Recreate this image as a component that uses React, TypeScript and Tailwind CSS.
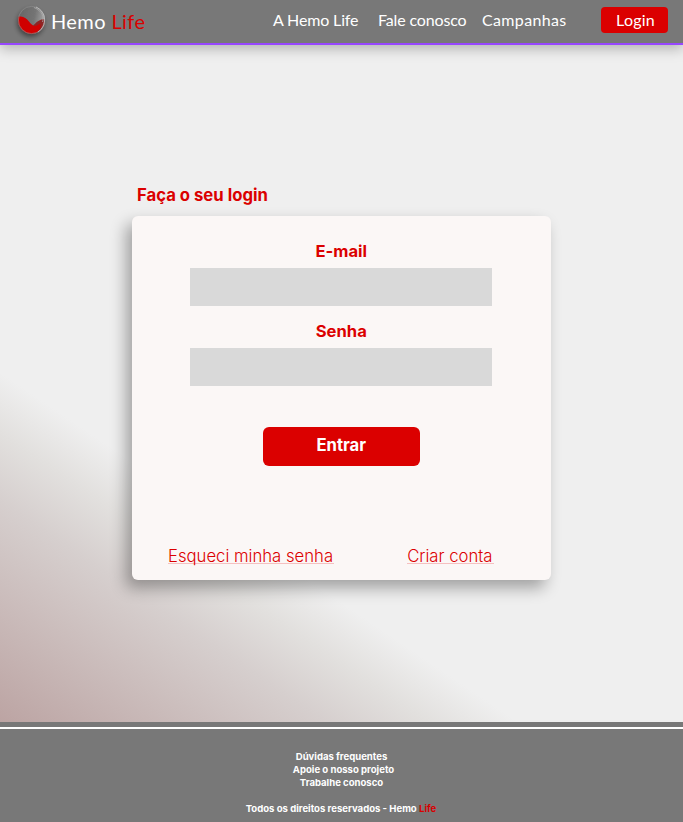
import React from 'react';

function Logo() {
  return (
    <svg className="block h-[44px] w-[44px] shrink-0" viewBox="0 0 44 44" aria-hidden="true">
      <defs>
        <filter id="drop" x="-30%" y="-30%" width="160%" height="170%">
          <feDropShadow dx="-1" dy="3" stdDeviation="2.4" floodColor="#000" floodOpacity="0.45" />
        </filter>
        <linearGradient id="glass" x1="0" x2="1" y1="0" y2="0.2">
          <stop offset="0" stopColor="#666" />
          <stop offset="0.65" stopColor="#747474" />
          <stop offset="1" stopColor="#a0a0a0" />
        </linearGradient>
        <clipPath id="ball">
          <ellipse cx="22.6" cy="20" rx="13.4" ry="13.8" />
        </clipPath>
      </defs>
      <ellipse cx="22.6" cy="20" rx="13.4" ry="13.8" fill="url(#glass)" filter="url(#drop)" />
      <g clipPath="url(#ball)">
        <path d="M23 27 C28 21 31 19 37 19 V34 H20Z" fill="#8e2424" />
        <path d="M8 17.5 C13 15 17 18 20 21.5 C24 26.5 26 27.5 31 23.5 C33 28 29 34 22 34 H8Z" fill="#d00000" />
      </g>
      <ellipse cx="22.6" cy="20" rx="13.2" ry="13.6" fill="none" stroke="#999" strokeWidth="0.5" />
      <path d="M27 7 C38 12 38 26 29 32" fill="none" stroke="#bdbdbd" strokeWidth="0.9" />
      <path d="M25 7.5 C34 11 35 18 33.5 22" fill="none" stroke="#aaa" strokeWidth="0.8" />
    </svg>
  );
}

function Header() {
  return (
    <header className="relative z-10 flex h-[45px] shrink-0 items-start border-b-2 border-[#9747ff] bg-[#787878] pl-[9px] font-['Lato',sans-serif] text-white shadow-[0_4px_12px_rgba(0,0,0,0.25)]">
      <Logo />
      <a className="-ml-[2px] mt-[7px] w-[222px] whitespace-nowrap text-[20px] leading-[28px] tracking-[0.4px]">
        Hemo <span className="text-[#d90000]">Life</span>
      </a>
      <nav className="mt-[8px] flex whitespace-nowrap text-[16px] leading-[24px]">
        <a className="w-[105px] tracking-[-0.15px]">A Hemo Life</a>
        <a className="w-[104px] tracking-[-0.15px]">Fale conosco</a>
        <a className="w-[119px] tracking-[0.35px]">Campanhas</a>
      </nav>
      <a className="mt-[7px] h-[26px] w-[67px] rounded bg-[#db0000] pl-[2px] text-center text-[16px] leading-[26px] tracking-[0.2px]">Login</a>
    </header>
  );
}

function Field({ label }: { label: string }) {
  return (
    <label className="flex w-[302px] flex-col items-center">
      <span className="h-[28px] text-[16.6px] font-bold leading-[22px] text-[#db0000]">{label}</span>
      <span className="h-[38px] w-full bg-[#d9d9d9]" />
    </label>
  );
}

function LoginCard() {
  return (
    <section className="ml-[132px] w-[418.5px]">
      <h1 className="h-[32px] pl-[5px] text-[16.7px] font-bold leading-[22px] text-[#db0000]">Faça o seu login</h1>
      <form className="flex h-[363.5px] flex-col items-center rounded-[6px] bg-[#fbf7f6] pt-[24px] shadow-[-6px_8px_16px_rgba(0,0,0,0.33)]">
        <Field label="E-mail" />
        <div className="h-[14px]" />
        <Field label="Senha" />
        <button type="button" className="mt-[41px] h-[38.5px] w-[157px] rounded-[6px] bg-[#db0000] pb-[1.5px] text-[16.7px] font-bold text-white">
          Entrar
        </button>
        <div className="mt-[80.5px] flex w-full justify-between whitespace-nowrap pl-[36px] pr-[57px] text-[16.7px] font-light leading-[20px] text-[#db0000]">
          <a className="h-[18px] border-b border-[#f5c0c0] pr-px">Esqueci minha senha</a>
          <a className="h-[18px] border-b border-[#f5c0c0] pr-px">Criar conta</a>
        </div>
      </form>
    </section>
  );
}

function Footer() {
  return (
    <footer className="h-[100px] shrink-0 bg-[#787878] pt-[5px] text-center text-[9.55px] font-bold leading-[13.3px] text-white">
      <div className="h-[2px] bg-white" />
      <div className="mt-[20.6px]">
        <p>Dúvidas frequentes</p>
        <p className="pl-[4px]">Apoie o nosso projeto</p>
        <p>Trabalhe conosco</p>
        <p className="mt-[13px] pr-[1px]">
          Todos os direitos reservados - Hemo <span className="text-[#d90000]">Life</span>
        </p>
      </div>
    </footer>
  );
}

export default function App() {
  return (
    <div className="flex h-[822px] w-[683px] flex-col overflow-hidden font-['Inter',sans-serif]">
      <Header />
      <main className="flex-1 bg-[linear-gradient(34deg,#bca4a3_0px,#d6cfce_183px,#e2e0de_240px,#efefef_290px)] pt-[139px]">
        <LoginCard />
      </main>
      <Footer />
    </div>
  );
}
